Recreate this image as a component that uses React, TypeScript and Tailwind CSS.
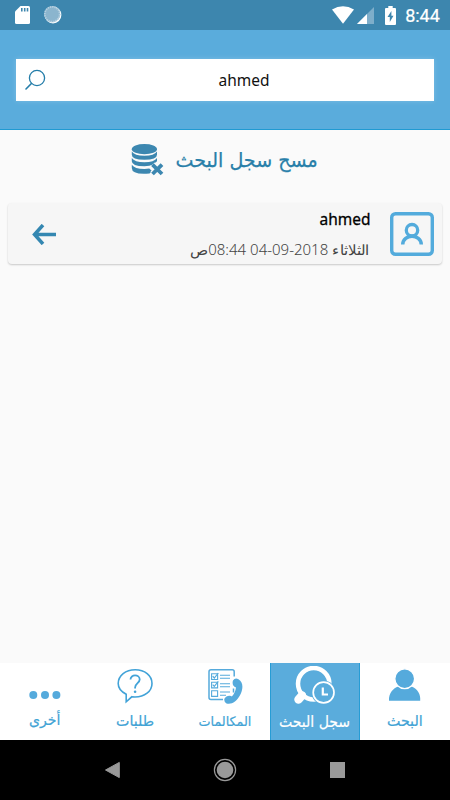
import { useLayoutEffect, useRef, useState } from 'react';
import type { ReactNode } from 'react';

const ARABIC = "font-['DejaVu_Sans','Noto_Sans',sans-serif]";

/* Condenses or widens one line of text so that it fills its box. */
function FitText({ children, className, dir }: { children: ReactNode; className: string; dir?: 'rtl' | 'ltr' }) {
  const box = useRef<HTMLDivElement>(null);
  const line = useRef<HTMLSpanElement>(null);
  const [scale, setScale] = useState(1);
  useLayoutEffect(() => {
    if (box.current && line.current) setScale(box.current.clientWidth / line.current.offsetWidth);
  }, [children]);
  return (
    <div ref={box} dir={dir} className={`flex shrink-0 items-center justify-center whitespace-nowrap ${className}`}>
      <span ref={line} className="shrink-0" style={{ transform: `scaleX(${scale})` }}>
        {children}
      </span>
    </div>
  );
}

function StatusBar() {
  return (
    <div className="flex h-[30px] items-center bg-[#3d86ae]">
      <svg className="ml-[15px] h-[18px] w-[15px]" viewBox="0 0 15 18">
        <path d="M5.5 0H13.5Q15 0 15 1.5V16.5Q15 18 13.5 18H1.5Q0 18 0 16.5V5.5Z" fill="#fff" />
        <path d="M6.8 2v3.5M9.7 2v3.5M12.5 2v3.5" stroke="#3d86ae" strokeWidth="1.6" />
      </svg>
      <svg className="ml-[13px] h-[20px] w-[20px]" viewBox="0 0 20 20">
        <circle cx="10" cy="10" r="8.4" fill="#fff" />
        <circle cx="9.2" cy="9.2" r="8" fill="#8bb5ce" />
        <circle cx="9.2" cy="9.2" r="7.4" fill="none" stroke="#b4cfdf" strokeWidth="1.7" strokeDasharray="1.5 .8" />
      </svg>
      <div className="flex-1" />
      <svg className="h-[18px] w-[22px]" viewBox="0 0 22 18">
        <path d="M0 3.5Q11-3 22 3.5L11 17.7Z" fill="#fff" />
      </svg>
      <svg className="ml-[3px] h-[17px] w-[17px]" viewBox="0 0 17 17">
        <path d="M17 0V17H0Z" fill="#7eaeca" />
        <path d="M10 7V17H0Z" fill="#fff" />
      </svg>
      <svg className="ml-[11px] h-[19px] w-[11px]" viewBox="0 0 11 19">
        <path d="M3.3 0H7.7V2H10Q11 2 11 3V18Q11 19 10 19H1Q0 19 0 18V3Q0 2 1 2H3.3Z" fill="#fff" />
        <path d="M6.4 5L2.5 11H4.8V16L8.5 9.7H6.4Z" fill="#3d86ae" />
      </svg>
      <FitText className="ml-[9px] mr-[10px] h-[30px] w-[35px] pt-px font-['Roboto',sans-serif] text-[18px] text-white [-webkit-text-stroke:0.2px_white]">
        8:44
      </FitText>
    </div>
  );
}

function SearchHeader() {
  return (
    <header className="h-[100px] border-b border-[#209ad2] bg-[#5aacdc] px-4 pt-[29px]">
      <div className="relative flex h-[42px] items-center justify-center bg-white shadow-[0_0_5px_rgba(255,255,255,0.22)]">
        <svg className="absolute left-[9px] top-[10px] h-[22px] w-[22px]" viewBox="0 0 22 22" fill="none" stroke="#247da9" strokeLinecap="round">
          <circle cx="12" cy="9" r="7.6" strokeWidth="1.3" />
          <path d="M6.4 14.5L1 20" strokeWidth="1.6" />
        </svg>
        <FitText className="ml-[38px] w-[51px] font-['Noto_Sans',sans-serif] text-[17px] text-[#111]">ahmed</FitText>
      </div>
    </header>
  );
}

function ClearHistory() {
  return (
    <div className="flex h-[73px] pl-[131px]">
      <svg className="mt-[14px] h-[33px] w-[33px]" viewBox="0 0 33 33">
        <g fill="#3c87b0">
          <ellipse cx="13.4" cy="5.2" rx="12.6" ry="5.1" />
          <path d="M.8 7.6Q3.5 11.8 13.4 11.8T26 7.6V10.8Q26 15.8 13.4 15.8T.8 10.8Z" />
          <path d="M.8 14.1Q3.5 18.3 13.4 18.3T26 14.1V17.3L22 20.5Q19 22.3 13.4 22.3Q.8 22.3.8 17.3Z" />
          <path d="M.8 20.7Q3.5 24.9 13.4 24.9L18.3 24.5L21 27L18.5 29.5Q.8 31 .8 24Z" />
        </g>
        <path d="M21.5 20.6L31 30M31 20.6L21.5 30" stroke="#fafafa" strokeWidth="6" />
        <path d="M21.5 20.6L31 30M31 20.6L21.5 30" stroke="#3c87b0" strokeWidth="3.8" />
      </svg>
      <FitText dir="rtl" className={`ml-[12px] mt-[13px] h-[34px] w-[142px] text-[20px] text-[#287fa9] [-webkit-text-stroke:0.25px_#287fa9] ${ARABIC}`}>
        مسح سجل البحث
      </FitText>
    </div>
  );
}

function HistoryRow() {
  return (
    <div className="mx-2 flex h-[61px] rounded-[4px] bg-[#f6f6f6] shadow-[0_1px_2px_rgba(0,0,0,0.2)]">
      <svg className="ml-[24px] mt-[21px] h-[21px] w-[24px]" viewBox="0 0 24 21" fill="none" stroke="#3487b1" strokeWidth="3.5">
        <path d="M11 1L2.5 10.5L11 20M3 10.5H24" />
      </svg>
      <div className="flex flex-1 flex-col items-end">
        <FitText className="mt-[5px] h-[22px] w-[51px] font-['Noto_Sans',sans-serif] text-[17px] text-black [-webkit-text-stroke:0.3px_black]">ahmed</FitText>
        <FitText dir="rtl" className="mt-[8px] h-[22px] w-[180px] text-[14px] text-[#444]">
          <span className="font-['Noto_Sans','DejaVu_Sans',sans-serif] font-light">
            الثلاثاء <bdi dir="ltr">04-09-2018</bdi> <bdi dir="ltr">08:44</bdi>ص
          </span>
        </FitText>
      </div>
      <svg className="ml-[20px] mr-[8px] mt-[9px] h-[44px] w-[44px]" viewBox="0 0 44 44" fill="none" stroke="#53abdc">
        <rect x="1.7" y="1.7" width="40.6" height="40.6" rx="3.8" strokeWidth="3.4" />
        <circle cx="22" cy="18.2" r="5.7" strokeWidth="3.3" />
        <path d="M12.7 32.5C13 21.5 31 21.5 31.3 32.5" strokeWidth="3.5" />
      </svg>
    </div>
  );
}

function BottomTabs() {
  return (
    <nav className="grid h-[77px] grid-cols-5 bg-white text-[#42a3d5] [-webkit-text-stroke:0.2px_currentColor]">
      <div className="flex flex-col items-center">
        <svg className="mt-[8px] h-[36px] w-[36px]" viewBox="0 0 36 36" fill="#55aadc">
          <circle cx="6.3" cy="24" r="4" />
          <circle cx="18" cy="24" r="4" />
          <circle cx="29.4" cy="24" r="4" />
        </svg>
        <FitText dir="rtl" className={`mt-px h-[24px] w-[31px] text-[15px] ${ARABIC}`}>أخرى</FitText>
      </div>
      <div className="flex flex-col items-center">
        <svg className="mt-[5px] h-[36px] w-[36px]" viewBox="0 0 36 36" fill="none" stroke="#42a3d8" strokeWidth="1.6">
          <path d="M9.2 26.3C4.5 24 1.2 20 1.2 15.6C1.2 7.6 8.7 1.8 18.2 1.8S35 7.6 35 15.5S27.5 29 18 29Q15.3 29 14.8 28.8L9.2 33.8Z" />
          <path d="M13.5 11.5C13.5 6 22.7 6.1 22.7 11.6C22.7 15 18.1 15.5 18.1 19.5V20.5" strokeWidth="1.8" />
          <circle cx="18.1" cy="23.7" r="1.3" fill="#42a3d8" stroke="none" />
        </svg>
        <FitText dir="rtl" className={`mt-[5px] h-[24px] w-[38px] text-[15px] ${ARABIC}`}>طلبات</FitText>
      </div>
      <div className="flex flex-col items-center">
        <svg className="mt-[5px] h-[36px] w-[36px]" viewBox="0 0 36 36" fill="none" stroke="#55aadc">
          <path d="M27.2 8.5V3.8Q27.2 1.8 25.2 1.8H4Q2 1.8 2 3.8V29.5Q2 31.5 4 31.5H16M26.5 20.5V24.5" strokeWidth="1.5" />
          <path d="M4.6 5.8H10.6V11.5H4.6ZM4.6 14.2H10.6V19.9H4.6ZM4.6 22.7H10.6V28.4H4.6Z" strokeWidth="1.1" />
          <path d="M5.7 8.2L7.3 10L11.3 5M5.7 16.6L7.3 18.4L11.3 13.4" strokeWidth="1.2" />
          <path d="M13 7.2H23M13 10.3H23M13 15.7H23M13 18.7H23M13 24H23M13 27.2H19" strokeWidth="1.1" />
          <path d="M26 12.5Q28 9.3 31.5 11.2C36.8 14.5 36.1 21.5 33 27.3C29.8 33.4 24.3 37 19.5 35.4Q16.8 34 17.4 30.8Q19.2 27.6 22.5 27.7Q24.5 27.9 24.8 28.6C26.9 26.5 28.7 23 29 19.5Q27.4 19.1 26.3 17.6Q25.1 15 26 12.5Z" fill="#55aadc" stroke="none" />
        </svg>
        <FitText dir="rtl" className={`mt-[6px] h-[24px] w-[53px] text-[13px] ${ARABIC}`}>المكالمات</FitText>
      </div>
      <div className="flex flex-col items-center border-x border-[#269cd5] bg-[#5aacdc] text-white">
        <svg className="mt-[3px] h-[42px] w-[44px]" viewBox="0 0 44 42" fill="none">
          <circle cx="20.7" cy="17.7" r="15.7" stroke="#fff" strokeWidth="4.5" />
          <path d="M9 29.5L5.5 33.5" stroke="#fff" strokeWidth="8.5" strokeLinecap="round" />
          <circle cx="30.6" cy="26.5" r="12.1" fill="#5aacdc" />
          <circle cx="30.6" cy="26.5" r="10.4" stroke="#fff" strokeWidth="1.7" />
          <path d="M29.8 21.5V28.5H35" stroke="#fff" strokeWidth="2.2" />
        </svg>
        <FitText dir="rtl" className={`mt-[2px] h-[24px] w-[71px] text-[16px] ${ARABIC}`}>سجل البحث</FitText>
      </div>
      <div className="flex flex-col items-center">
        <svg className="mt-[5px] h-[34px] w-[34px]" viewBox="0 0 34 34" fill="#55aadc">
          <path d="M1 32.8V30C2 23 7.2 18.7 12 18.2L17 20.4L22 18.2C28 19 32 24.6 32.2 30V32.8Z" />
          <circle cx="16.7" cy="10.7" r="9.9" stroke="#fff" strokeWidth="1.3" />
        </svg>
        <FitText dir="rtl" className={`mt-[7px] h-[24px] w-[36px] text-[15px] ${ARABIC}`}>البحث</FitText>
      </div>
    </nav>
  );
}

function SystemNav() {
  return (
    <div className="flex h-[60px] items-center justify-between bg-black px-[104px]">
      <svg className="h-[18px] w-[17px]" viewBox="0 0 17 18">
        <path d="M1.5 9L15.3 1.4V16.6Z" fill="#999" stroke="#999" strokeLinejoin="round" />
      </svg>
      <svg className="-ml-px h-[24px] w-[24px]" viewBox="0 0 24 24">
        <circle cx="12" cy="12" r="10.6" fill="none" stroke="#999" strokeWidth="1.2" />
        <circle cx="12" cy="12" r="8.3" fill="#999" />
      </svg>
      <div className="mr-px h-4 w-[15px] bg-[#999]" />
    </div>
  );
}

export default function App() {
  return (
    <div className="flex h-[800px] w-[450px] flex-col overflow-hidden bg-[#fafafa]">
      <StatusBar />
      <SearchHeader />
      <ClearHistory />
      <HistoryRow />
      <main className="flex-1" />
      <BottomTabs />
      <SystemNav />
    </div>
  );
}
